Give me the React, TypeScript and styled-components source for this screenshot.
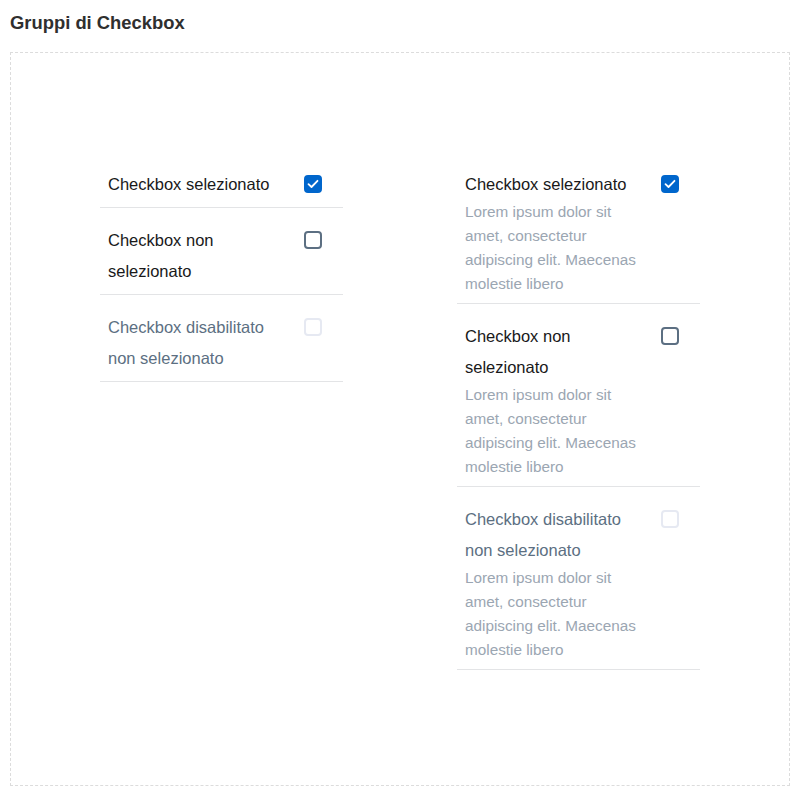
import React from "react";
import styled, { createGlobalStyle } from "styled-components";

const Global = createGlobalStyle`
  html, body { margin: 0; padding: 0; background: #fff; }
  body { font-family: "Liberation Sans", Arial, sans-serif; }
`;

const Page = styled.div`
  padding: 12px 10px 26px 10px;
`;

const Title = styled.h4`
  margin: 0 0 18px 0;
  font-family: "Liberation Sans", Arial, sans-serif;
  font-weight: 700;
  font-size: 18.4px;
  line-height: 22px;
  color: #2f2f2f;
`;

const Box = styled.div`
  border: 1px dashed #dcdcdc;
  padding: 99px 0 115px 0;
  display: flex;
  justify-content: center;
  align-items: flex-start;
  gap: 114px;
`;

const Column = styled.div`
  width: 243px;
  display: flex;
  flex-direction: column;
`;

const Row = styled.div`
  display: flex;
  justify-content: space-between;
  align-items: flex-start;
  padding: 16px 21px 7px 8px;
  border-bottom: 1px solid #e3e4e6;
`;

const Text = styled.div`
  width: 182px;
`;

const Label = styled.div<{ $disabled?: boolean }>`
  font-size: 16.5px;
  line-height: 31.5px;
  padding-top: 1px;
  margin-bottom: -1px;
  color: ${(p) => (p.$disabled ? "#5c6f82" : "#19191a")};
`;

const Desc = styled.div`
  font-size: 15.3px;
  line-height: 24px;
  color: #9ba6b2;
`;

const Check = styled.span<{ $state: "checked" | "unchecked" | "disabled" }>`
  flex: none;
  box-sizing: border-box;
  width: 18px;
  height: 18px;
  margin-top: 7px;
  border-radius: 4px;
  display: flex;
  align-items: center;
  justify-content: center;
  background: ${(p) => (p.$state === "checked" ? "#0066cc" : "#fff")};
  border: 2px solid
    ${(p) =>
      p.$state === "checked" ? "#0066cc" : p.$state === "unchecked" ? "#5c6f82" : "#e6e9f2"};
`;

type Item = {
  label: string;
  state: "checked" | "unchecked" | "disabled";
};

const items: Item[] = [
  { label: "Checkbox selezionato", state: "checked" },
  { label: "Checkbox non selezionato", state: "unchecked" },
  { label: "Checkbox disabilitato non selezionato", state: "disabled" },
];

const lorem = "Lorem ipsum dolor sit amet, consectetur adipiscing elit. Maecenas molestie libero";

function Tick() {
  return (
    <svg width="12" height="10" viewBox="0 0 12 10" fill="none">
      <path d="M1.5 5.2 L4.5 8 L10.5 1.8" stroke="#fff" strokeWidth="1.8" strokeLinecap="round" strokeLinejoin="round" />
    </svg>
  );
}

function CheckRow({ item, desc }: { item: Item; desc?: boolean }) {
  return (
    <Row>
      <Text>
        <Label $disabled={item.state === "disabled"}>{item.label}</Label>
        {desc && <Desc>{lorem}</Desc>}
      </Text>
      <Check $state={item.state}>{item.state === "checked" && <Tick />}</Check>
    </Row>
  );
}

export default function App() {
  return (
    <Page>
      <Global />
      <Title>Gruppi di Checkbox</Title>
      <Box>
        <Column>
          {items.map((it) => (
            <CheckRow key={it.label} item={it} />
          ))}
        </Column>
        <Column>
          {items.map((it) => (
            <CheckRow key={it.label} item={it} desc />
          ))}
        </Column>
      </Box>
    </Page>
  );
}
